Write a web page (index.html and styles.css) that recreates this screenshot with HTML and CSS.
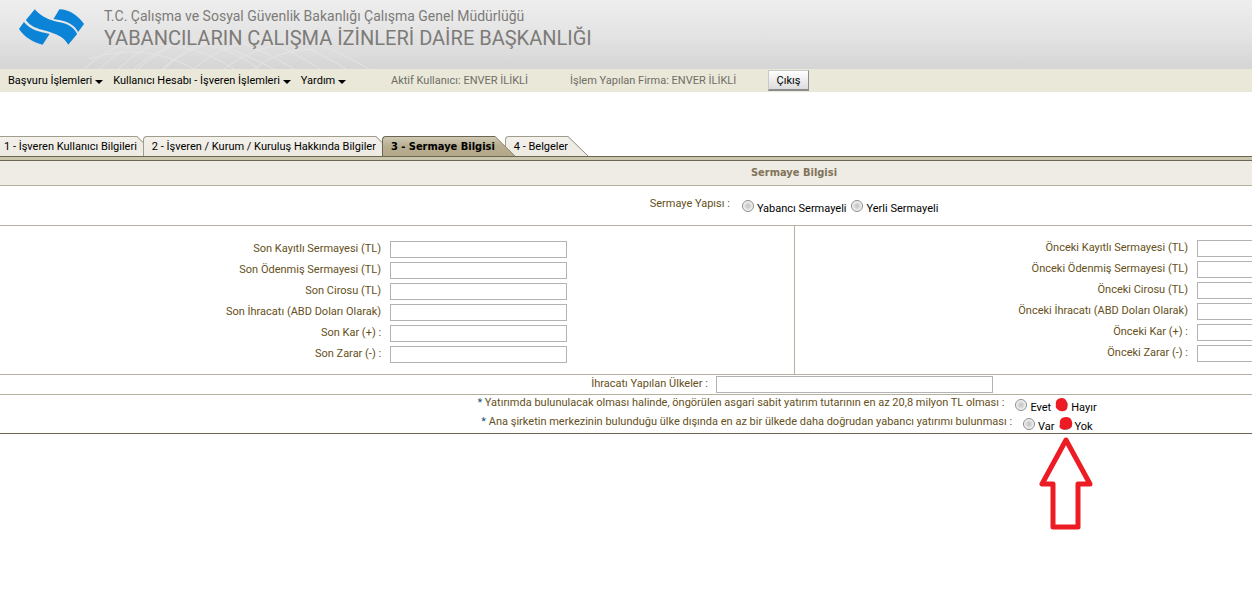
FILE: index.html
```html
<!DOCTYPE html>
<html lang="tr">
<head>
<meta charset="utf-8">
<title>Yabancıların Çalışma İzinleri Daire Başkanlığı</title>
<link rel="stylesheet" href="styles.css">
</head>
<body>
<div class="page">
  <header class="banner">
    <svg class="arcs" viewBox="0 0 320 34" fill="none" stroke="#e9e9e9" stroke-width="1" aria-hidden="true">
      <path d="M0 34Q70-30 190 34M16 34Q90-40 210 34M34 34Q120-44 236 34M54 34Q140-42 262 34M78 34Q160-40 285 34M5 24Q60 6 110 34M30 12Q100 0 150 34M60 5Q130 0 175 34M50 34Q80 6 130 0M80 34Q110 6 160 0M110 34Q140 6 190 4M140 34Q170 10 210 8M170 34Q195 14 230 14"/>
    </svg>
    <svg class="logo" viewBox="0 0 68 38" aria-hidden="true">
      <g fill="#0b84d8">
      <path d="M16 1C23 9 31 12 40 14C51 16 56 20 59 26L50 37C45 28 37 26 28 23C18 21 11 18 7 12Z"/>
      <path d="M5 14C12 22 20 24 31 26L24 37C15 35 5 29 0 21Z"/>
      <path d="M41 1C51 1 61 8 66 16L60 24C55 15 47 13 35 11Z"/></g>
    </svg>
    <div class="titles">
      <p class="ministry">T.C. Çalışma ve Sosyal Güvenlik Bakanlığı Çalışma Genel Müdürlüğü</p>
      <h1 class="department">YABANCILARIN ÇALIŞMA İZİNLERİ DAİRE BAŞKANLIĞI</h1>
    </div>
  </header>

  <nav class="menubar">
    <div class="menus">
      <button class="menu" type="button">Başvuru İşlemleri<span class="caret"></span></button>
      <button class="menu" type="button">Kullanıcı Hesabı - İşveren İşlemleri<span class="caret"></span></button>
      <button class="menu" type="button">Yardım<span class="caret"></span></button>
    </div>
    <span class="user">Aktif Kullanıcı: ENVER İLİKLİ</span>
    <span class="firm">İşlem Yapılan Firma: ENVER İLİKLİ</span>
    <button class="logout" type="button">Çıkış</button>
  </nav>

  <main class="content">
    <div class="tabs" role="tablist">
      <button class="tab first" type="button" role="tab"><span class="tab-text">1 - İşveren Kullanıcı Bilgileri</span><svg class="slant" viewBox="0 0 20 20"><path class="fill" d="M0 0L20 20H0Z"/><path class="edge" d="M0 .5L20 20"/></svg></button>
      <button class="tab" type="button" role="tab"><span class="tab-text">2 - İşveren / Kurum / Kuruluş Hakkında Bilgiler</span><svg class="slant" viewBox="0 0 20 20"><path class="fill" d="M0 0L20 20H0Z"/><path class="edge" d="M0 .5L20 20"/></svg></button>
      <button class="tab active" type="button" role="tab" aria-selected="true"><span class="tab-text">3 - Sermaye Bilgisi</span><svg class="slant" viewBox="0 0 20 20"><defs><linearGradient id="active-fill" gradientUnits="userSpaceOnUse" x1="0" y1="0" x2="0" y2="20"><stop offset="0" stop-color="#d0cab5"/><stop offset=".5" stop-color="#b7ad8f"/><stop offset="1" stop-color="#b3a98a"/></linearGradient></defs><path class="fill" d="M0 0L20 20H0Z"/><path class="edge" d="M0 .5L20 20"/></svg></button>
      <button class="tab last-tab" type="button" role="tab"><span class="tab-text">4 - Belgeler</span><svg class="slant" viewBox="0 0 20 20"><path class="fill" d="M0 0L20 20H0Z"/><path class="edge" d="M0 .5L20 20"/></svg></button>
    </div>

    <form class="panel">
      <h2 class="panel-title">Sermaye Bilgisi</h2>

      <div class="structure" role="radiogroup" aria-labelledby="yapi">
        <span class="label" id="yapi">Sermaye Yapısı :</span>
        <div class="options">
          <label class="option"><input type="radio" name="yapi">Yabancı Sermayeli</label>
          <label class="option"><input type="radio" name="yapi">Yerli Sermayeli</label>
        </div>
      </div>

      <div class="halves">
        <div class="half last">
          <div class="field"><label for="s1">Son Kayıtlı Sermayesi (TL)</label><input id="s1" type="text"></div>
          <div class="field"><label for="s2">Son Ödenmiş Sermayesi (TL)</label><input id="s2" type="text"></div>
          <div class="field"><label for="s3">Son Cirosu (TL)</label><input id="s3" type="text"></div>
          <div class="field"><label for="s4">Son İhracatı (ABD Doları Olarak)</label><input id="s4" type="text"></div>
          <div class="field"><label for="s5">Son Kar (+) :</label><input id="s5" type="text"></div>
          <div class="field"><label for="s6">Son Zarar (-) :</label><input id="s6" type="text"></div>
        </div>
        <div class="half previous">
          <div class="field"><label for="o1">Önceki Kayıtlı Sermayesi (TL)</label><input id="o1" type="text"></div>
          <div class="field"><label for="o2">Önceki Ödenmiş Sermayesi (TL)</label><input id="o2" type="text"></div>
          <div class="field"><label for="o3">Önceki Cirosu (TL)</label><input id="o3" type="text"></div>
          <div class="field"><label for="o4">Önceki İhracatı (ABD Doları Olarak)</label><input id="o4" type="text"></div>
          <div class="field"><label for="o5">Önceki Kar (+) :</label><input id="o5" type="text"></div>
          <div class="field"><label for="o6">Önceki Zarar (-) :</label><input id="o6" type="text"></div>
        </div>
      </div>

      <div class="countries">
        <label class="label" for="ulkeler">İhracatı Yapılan Ülkeler :</label>
        <input id="ulkeler" type="text">
      </div>

      <div class="questions">
        <div class="question" role="radiogroup" aria-labelledby="q1">
          <span class="label" id="q1"><span class="star">*</span> Yatırımda bulunulacak olması halinde, öngörülen asgari sabit yatırım tutarının en az 20,8 milyon TL olması :</span>
          <div class="options">
            <label class="option"><input type="radio" name="q1">Evet</label>
            <label class="option"><input type="radio" name="q1" checked>Hayır
              <svg class="blot" viewBox="0 0 14 14" aria-hidden="true"><path d="M3 1Q7-1 10 1Q13 4 12 8Q13 12 9 13Q5 14 2 11Q0 9 1 7Q0 3 3 1Z"/></svg>
            </label>
          </div>
        </div>
        <div class="question" role="radiogroup" aria-labelledby="q2">
          <span class="label" id="q2"><span class="star">*</span> Ana şirketin merkezinin bulunduğu ülke dışında en az bir ülkede daha doğrudan yabancı yatırımı bulunması :</span>
          <div class="options">
            <label class="option"><input type="radio" name="q2">Var</label>
            <label class="option"><input type="radio" name="q2" checked>Yok
              <svg class="blot" viewBox="0 0 14 14" aria-hidden="true"><path d="M3 1Q7-1 11 1Q14 4 13 8Q13 12 8 12Q4 14 1 11Q0 9 1 7Q0 3 3 1Z"/></svg>
              <svg class="arrow" viewBox="0 0 56 94" aria-hidden="true"><path d="M28 4L4 48H15V91H40V48H52Z"/></svg>
            </label>
          </div>
        </div>
      </div>
    </form>
  </main>
</div>
</body>
</html>
```
FILE: styles.css
```css
* { box-sizing: border-box; }

body {
  margin: 0;
  background: #fff;
  color: #000;
  font: 11px/16px Roboto, Tahoma, sans-serif;
}
.page { min-height: 100vh; overflow: hidden; }

button, input { font: inherit; color: inherit; }
h1, h2, p { margin: 0; font-weight: normal; }

/* Banner */
.banner {
  position: relative;
  display: flex;
  gap: 18px;
  height: 69px;
  padding: 8px 19px;
  background: linear-gradient(#eeeeee, #e4e4e4 50%, #d5d5d5);
}
.arcs { position: absolute; left: 84px; bottom: 0; width: 320px; height: 34px; opacity: .7; }
.logo { position: relative; width: 67px; height: 38px; flex: none; }
.titles { position: relative; color: #7d7b78; font-family: Roboto, sans-serif; white-space: nowrap; }
.ministry { font-size: 14px; line-height: 17px; }
.department { font-size: 20px; line-height: 26px; }

/* Menu bar */
.menubar {
  display: flex;
  align-items: center;
  height: 23px;
  padding-left: 8px;
  background: #eae8d9;
  white-space: nowrap;
}
.menus { display: flex; gap: 10px; width: 383px; }
.menu { display: flex; align-items: center; gap: 3px; padding: 0; border: 0; background: none; }
.caret { margin-top: 3px; border: 4px solid transparent; border-top-color: #000; border-bottom: 0; }
.user, .firm { color: #6f6d66; }
.user { width: 179px; }
.firm { width: 198px; }
.logout {
  width: 41px;
  height: 21px;
  padding: 2px 0 0;
  border: 1px solid #c9c9c9;
  border-right-color: #8c8c8c;
  border-bottom: 2px solid #8c8c8c;
  background: linear-gradient(#fff, #dcdcdc);
}

/* Tabs */
.content { padding-top: 44px; }
.tabs { display: flex; height: 20px; }
.tab {
  position: relative;
  display: flex;
  height: 20px;
  margin-left: -14px;
  padding: 0;
  border: 0;
  background: none;
  white-space: nowrap;
}
.tab.first { margin-left: -5px; }
.tab.last-tab { margin-left: -10px; }
.tab-text {
  height: 20px;
  padding: 2px 0 0 8px;
  border: 1px solid #a19c8c;
  border-width: 1px 0 0 1px;
  border-radius: 4px 0 0 0;
  background: linear-gradient(#f3f1ec, #ece9e0);
}
.slant { width: 20px; height: 20px; }
.fill { fill: #efece5; }
.edge { fill: none; stroke: #8f8a7a; }
.active { z-index: 1; font-family: "DejaVu Sans Condensed", Tahoma, sans-serif; font-weight: bold; }
.active .tab-text { border-color: #6b6552; background: linear-gradient(#d0cab5, #b7ad8f 50%, #b3a98a); }
.active .fill { fill: url(#active-fill); }

/* Panel: two halves on a sheet wider than the window */
.panel {
  width: calc(100% + 336px);
  border-top: 1px solid #6b6552;
  border-bottom: 1px solid #6b6552;
}
.panel-title {
  height: 29px;
  border-top: 3px solid #cbc7ae;
  border-bottom: 1px solid #b5b09f;
  background: linear-gradient(#6b6552 1px, #efece5 1px);
  color: #7f7358;
  font: bold 11px/26px "DejaVu Sans Condensed", Tahoma, sans-serif;
  text-align: center;
}
.label, .field label { color: #65501a; }
input[type="text"] {
  height: 17px;
  padding: 0 2px;
  border: 1px solid #b3b3b3;
  background: #fff;
}
input[type="radio"] {
  appearance: none;
  width: 12px;
  height: 12px;
  margin: 0;
  border: 1px solid #8b8b8b;
  border-radius: 50%;
  background: radial-gradient(#c9c9c9 0 1px, #dcdcdc 3px, #fafafa 5px);
}
input[type="radio"]:checked { background: radial-gradient(circle, #222 0 3px, #eee 4px); }

.structure { display: flex; justify-content: center; gap: 12px; height: 40px; padding-top: 10px; border-bottom: 1px solid #b5b09f; }
.options { display: flex; gap: 5px; }
.option { position: relative; display: flex; gap: 3px; white-space: nowrap; line-height: 18px; }
.structure .option { padding-top: 4px; }

.halves { display: grid; grid-template-columns: 1fr 1fr; border-bottom: 1px solid #b5b09f; }
.half { display: grid; gap: 4px; padding: 15px 0 11px; }
.previous { padding: 14px 0 12px; border-left: 1px solid #b5b09f; }
.field { display: grid; grid-template-columns: 48% 177px; gap: 9px; height: 17px; text-align: right; }
.previous .field { grid-template-columns: 393px 177px; }

.countries { display: flex; justify-content: center; gap: 8px; height: 20px; padding: 1px 4px 0 0; border-bottom: 1px solid #b5b09f; }
.countries input { width: 277px; }

.questions { padding-right: 14px; }
.question { display: flex; justify-content: center; gap: 11px; height: 19px; white-space: nowrap; }
.question .option { padding-top: 4px; height: 19px; }
.star { color: #1f4f7f; }

/* Red pen marks over the chosen answers */
.blot { position: absolute; left: -1px; top: 3px; width: 14px; height: 14px; fill: #ed1c24; }
.arrow { position: absolute; left: -22px; top: 22px; width: 56px; height: 94px; fill: none; stroke: #ed1c24; stroke-width: 5; stroke-linejoin: round; }
```
